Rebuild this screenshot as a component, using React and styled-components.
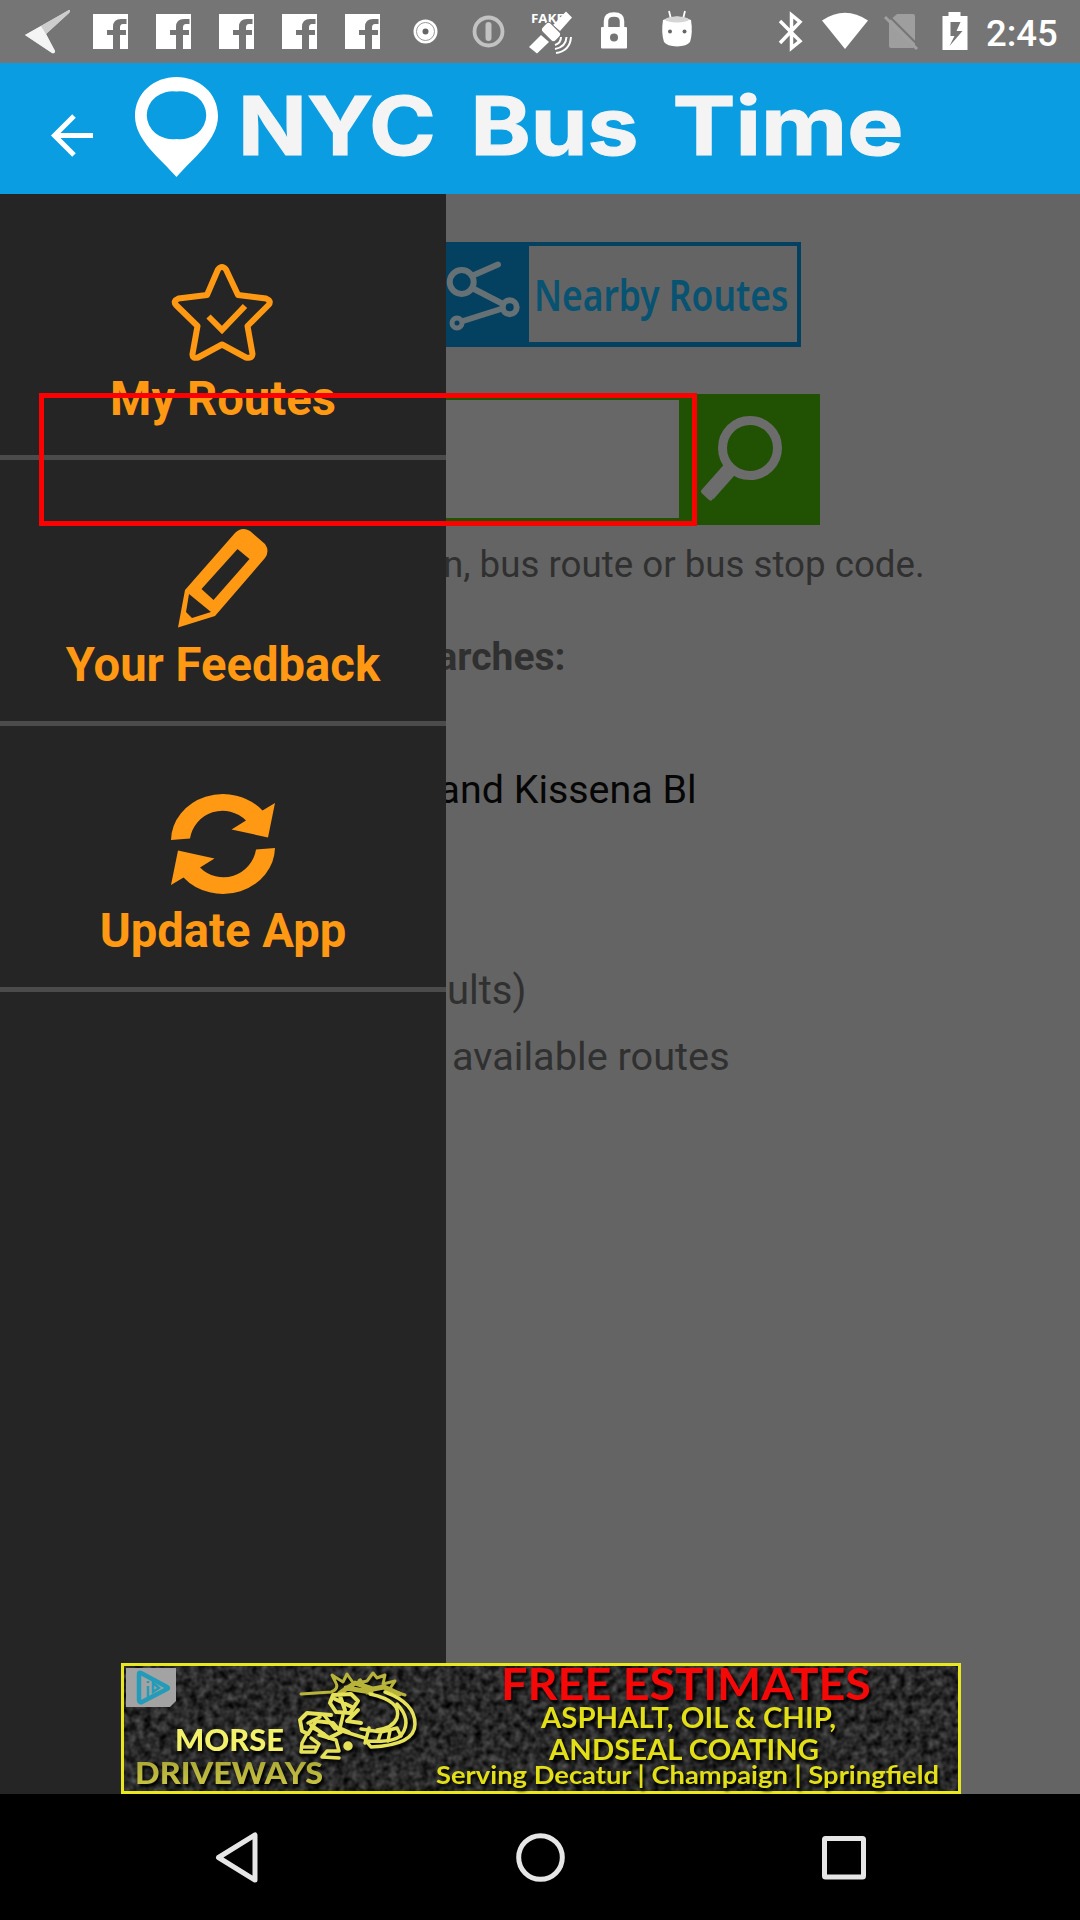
import React from "react";
import styled, { createGlobalStyle } from "styled-components";

const Global = createGlobalStyle`
  body { margin: 0; background: #646464; }
  * { box-sizing: border-box; }
  svg { display: block; flex: none; overflow: visible; }
`;

const Screen = styled.div`
  width: 1080px;
  height: 1920px;
  display: flex;
  flex-direction: column;
  overflow: hidden;
  font-family: Roboto, "Liberation Sans", sans-serif;
`;

const StatusBar = styled.header`
  height: 63px;
  flex: none;
  display: flex;
  align-items: center;
  background: #757575;
  padding-left: 16px;
`;

const Slot = styled.div`
  width: ${(p) => p.$w || 63}px;
  height: 63px;
  flex: none;
  display: flex;
  justify-content: center;
`;

const Spacer = styled.div`
  flex: 1;
`;

const Clock = styled.time`
  width: 101px;
  padding-left: 7px;
  color: #fff;
  font-size: 36.5px;
  font-weight: 500;
  line-height: 63px;
  padding-top: 3px;
`;

const AppBar = styled.div`
  height: 131px;
  flex: none;
  display: flex;
  align-items: center;
  background: #0a9de2;
  padding-left: 47px;
`;

const BackButton = styled.button`
  width: 50px;
  height: 50px;
  margin: 12px 34px 0 0;
  padding: 0;
  border: 0;
  background: none;
`;

const Body = styled.div`
  position: relative;
  flex: 1;
  display: flex;
`;

const Page = styled.main`
  flex: 1;
  display: flex;
  flex-direction: column;
  align-items: flex-start;
  padding: 48px 0 0 300px;
  background: #646464;
`;

const NearbyButton = styled.div`
  width: 501px;
  height: 105px;
  display: flex;
  justify-content: flex-end;
  background: #04405f;
  padding: 4px 4px 5px 0;
`;

const NearbyLabel = styled.div`
  width: 268px;
  height: 96px;
  background: #646464;
`;

const NearbyIcon = styled.div`
  width: 83px;
  height: 96px;
`;

const SearchRow = styled.div`
  width: 520px;
  height: 131px;
  margin-top: 47px;
  display: flex;
  background: #215203;
  padding: 6px 0 7px;
`;

const SearchInput = styled.div`
  width: 379px;
  background: #676767;
`;

const SearchButton = styled.div`
  width: 141px;
`;

const Line = styled.div`
  height: 48px;
  line-height: 48px;
  margin-top: ${(p) => p.$gap}px;
  margin-left: ${(p) => p.$left}px;
  font-size: ${(p) => p.$size || 40}px;
  font-weight: ${(p) => (p.$bold ? 700 : 400)};
  color: ${(p) => (p.$strong ? "#060606" : "#303030")};
  white-space: nowrap;
`;

const Drawer = styled.nav`
  position: absolute;
  left: 0;
  top: 0;
  bottom: 0;
  width: 446px;
  background: #252525;
`;

const DrawerItem = styled.div`
  height: 266px;
  display: flex;
  flex-direction: column;
  align-items: center;
  padding-top: 62px;
  border-bottom: 5px solid #4b4b4b;
`;

const DrawerLabel = styled.span`
  margin-top: 6px;
  font-size: 47.2px;
  line-height: 55px;
  font-weight: 700;
  color: #ff9914;
`;

const Highlight = styled.div`
  position: absolute;
  left: 39px;
  top: 199px;
  width: 658px;
  height: 133px;
  border: 5px solid #fa0202;
`;

const Ad = styled.aside`
  position: absolute;
  left: 121px;
  bottom: 0;
  width: 840px;
  height: 131px;
`;

const NavBar = styled.footer`
  height: 126px;
  flex: none;
  display: flex;
  justify-content: center;
  align-items: center;
  gap: 243px;
  background: #000;
`;

const Fit = ({ x, y, w, size, fill, weight = 700, family = "Lato", children, ...rest }) => (
  <text
    x={x}
    y={y}
    textLength={w}
    lengthAdjust="spacingAndGlyphs"
    fontSize={size}
    fill={fill}
    fontWeight={weight}
    fontFamily={`${family}, sans-serif`}
    {...rest}
  >
    {children}
  </text>
);

const Facebook = () => (
  <svg width="35" height="63" viewBox="0 0 35 63">
    <path fill="#fff" d="M0 14H35V49H27V35H33V30H27V27.500Q27 24 30 24H33.500V19H28Q20 19 20 27V30H14V35H20V49H0Z" />
  </svg>
);

const ORANGE = "#ff9914";

const StarIcon = () => (
  <svg width="110" height="110" viewBox="168 256 110 110" fill="none" stroke={ORANGE} strokeWidth="6">
    <path
      strokeLinejoin="round"
      d="M218 269.500Q222 264.500 226 269.500L238 295L266 298.500Q272 301 268.500 305L247.500 326L252.500 354Q252 359 246 357.500L222 344.500L198 357.500Q192 359 192.500 354L197.500 326L176 305Q172.500 301 178.500 298.500L207 295Z"
    />
    <path d="M208.500 316.500L222 330L245 306" />
  </svg>
);

const PencilIcon = () => (
  <svg width="110" height="110" viewBox="168 522 110 110">
    <path
      fill={ORANGE}
      fillRule="evenodd"
      d="M178 627.500L185 590L235 533Q242 526 250 531L265 544Q270 551 265 558L215 616ZM237.500 549L201.500 589L213.500 600L249.500 559ZM189 594L186 612L192 618L211 612Z"
    />
  </svg>
);

const HALF_ARROW =
  "M171 840A52 47 0 0 1 262.500 810.500L275 803L268 837.500L231.500 829.500L246 820.500A33 33 0 0 0 190 838.500Z";

const RefreshIcon = () => (
  <svg width="110" height="110" viewBox="168 788 110 110" fill={ORANGE}>
    <path d={HALF_ARROW} />
    <path d={HALF_ARROW} transform="rotate(180 223 844)" />
  </svg>
);

const AdBanner = () => (
  <svg width="840" height="131" viewBox="0 0 840 131">
    <defs>
      <filter id="asphalt" x="0" y="0" width="100%" height="100%" colorInterpolationFilters="sRGB">
        <feTurbulence type="fractalNoise" baseFrequency="0.13" numOctaves="2" seed="4" />
        <feColorMatrix values="0.42 0 0 0 -0.05  0.42 0 0 0 -0.05  0.42 0 0 0 -0.05  0 0 0 0 1" />
      </filter>
      <filter id="shadow" x="-5%" y="-20%" width="110%" height="150%" colorInterpolationFilters="sRGB">
        <feDropShadow dx="2" dy="3" stdDeviation="1.5" floodColor="#000" floodOpacity="1" />
      </filter>
      <linearGradient id="gold" x1="0" y1="0" x2="0" y2="1">
        <stop offset="0" stopColor="#a5a134" />
        <stop offset="1" stopColor="#cdc845" />
      </linearGradient>
    </defs>
    <rect width="840" height="131" fill="#2a2a2a" />
    <rect width="840" height="131" filter="url(#asphalt)" />
    <rect x="1.500" y="1.500" width="837" height="128" fill="none" stroke="#e9e71d" strokeWidth="3" />
    <path d="M5 5H55V38L49 44H5Z" fill="#a3a3a3" />
    <path d="M18 11Q18 9 20 10L46 24Q48 25 46 26L21 39Q18 40 18 37Z" fill="none" stroke="#249bb8" strokeWidth="4.500" />
    <path d="M27 18V20M27 23V34M32 20L38 25L32 29Z" fill="none" stroke="#249bb8" strokeWidth="2.500" />
    <g filter="url(#shadow)">
      <Fit x={54} y={88} w={109} size={30.500} fill="#f3f06a" weight={900}>MORSE</Fit>
      <Fit x={14} y={121} w={188} size={30.500} fill="url(#gold)" weight={900}>DRIVEWAYS</Fit>
    </g>
    <g fill="none" stroke="#e5e158" strokeWidth="3.500" strokeLinecap="round" strokeLinejoin="round" filter="url(#shadow)">
      <g stroke="#b8b43a">
        <path d="M180 31L210 29Q219 26 214 18L211 12L222 19L226 11L233 21L246 18L252 10L256 15L264 12L262 21L274 18L268 27L284 32" strokeWidth="3" />
        <path d="M219 30L234 20L252 26L263 24L278 31M225 25L250 29M239 18L246 29" strokeWidth="5" />
      </g>
      <path d="M249 31Q281 38 276 55Q272 65 256 67M264 29Q294 40 294 61Q294 82 250 84L245 78Q275 80 281 71Q291 57 276 41" />
      <path d="M240 66L260 69L276 65L280 73M248 65L244 80M260 69L257 78M269 68L267 78M218 67L244 75" />
      <path d="M212 32L230 31L237 38L229 50L215 49L209 40ZM214 36L231 44M219 33L224 47M237 47L226 58L240 60M210 52L186 50L179 57L181 68L187 71L195 58L212 60L220 69L208 75L190 62" strokeWidth="4" />
      <path d="M186 71L181 80L180 89L194 89L198 81L190 75M198 72L215 77L218 88L206 88L201 94L218 95M187 60L199 54M192 65L203 71M222 52L219 65L228 69M203 52L214 66M183 84L194 84" />
      <circle cx="227" cy="83" r="3" fill="#e5e158" />
    </g>
    <g filter="url(#shadow)">
      <Fit x={380} y={37} w={370} size={44} fill="#f50808">FREE ESTIMATES</Fit>
    </g>
    <g filter="url(#shadow)">
      <Fit x={420} y={65} w={295} size={28} fill="#e3df17">ASPHALT, OIL &amp; CHIP,</Fit>
      <Fit x={428} y={97} w={270} size={28} fill="#e3df17">ANDSEAL COATING</Fit>
      <Fit x={315} y={121} w={503} size={24} fill="#e3df17">Serving Decatur | Champaign | Springfield</Fit>
    </g>
  </svg>
);

export default function App() {
  return (
    <Screen>
      <Global />
      <StatusBar>
        <Slot>
          <svg width="63" height="63" viewBox="16 0 63 63">
            <path d="M25 35L69 10Q71 10 69 13L46 34L55 51Q55 54 52 53Z" fill="#e3e3e3" />
            <path d="M25 35L41 26L46 34L55 51Q55 54 52 53Z" fill="#f4f4f4" />
            <path d="M41 26L69 10Q71 10 69 13L46 34Z" fill="#cdcdcd" />
          </svg>
        </Slot>
        {[0, 1, 2, 3, 4].map((i) => (
          <Slot key={i}><Facebook /></Slot>
        ))}
        <Slot>
          <svg width="30" height="63" viewBox="0.500 0 30 63">
            <circle cx="15" cy="31.500" r="12" fill="#fff" />
            <circle cx="15" cy="31.500" r="9" fill="none" stroke="#999" />
            <circle cx="15" cy="31.500" r="3" fill="#666" />
          </svg>
        </Slot>
        <Slot>
          <svg width="40" height="63" viewBox="0.500 0 40 63">
            <circle cx="20" cy="31.500" r="14" fill="none" stroke="#c2c2c2" strokeWidth="3.800" />
            <path d="M20 25V38" stroke="#c2c2c2" strokeWidth="6" strokeLinecap="round" />
          </svg>
        </Slot>
        <Slot>
          <svg width="63" height="63" viewBox="520 0 63 63">
            <Fit x={531} y={22.500} w={33} size={13} fill="#fff" family="Open Sans">FAKE</Fit>
            <path d="M553 25L566 11.500L572 17.500L560 31Z" fill="#fff" />
            <path d="M529 47L541 35L549 42L537 53.500Z" fill="#fff" />
            <rect x="-9.500" y="-6" width="19" height="12" rx="3.500" transform="translate(551 32) rotate(45)" fill="#fff" stroke="#757575" />
            <path d="M561 37Q561 43 555 45M566.500 37Q566 47 555 49M571 37Q570 51 556 53" fill="none" stroke="#fff" strokeWidth="2" />
          </svg>
        </Slot>
        <Slot>
          <svg width="28" height="63" viewBox="1 0 28 63">
            <path d="M6 27V21Q6 14.500 14 14.500Q22 14.500 22 21V27" fill="none" stroke="#fff" strokeWidth="4.500" />
            <rect x="1" y="27" width="26" height="21.500" rx="1" fill="#fff" />
            <circle cx="14" cy="37.500" r="4" fill="#757575" />
          </svg>
        </Slot>
        <Slot>
          <svg width="32" height="63" viewBox="1 0 32 63">
            <path d="M8 11L10 19M24 11L22 19" stroke="#fff" strokeWidth="1.800" />
            <path d="M2 20Q16 13 30 20Q32 33 29 42Q26 46 16 46.500Q6 46 3 42Q0 33 2 20Z" fill="#fff" />
            <ellipse cx="16" cy="19.500" rx="12" ry="3" fill="#d5d5d5" />
            <circle cx="9" cy="31.500" r="2" fill="#666" />
            <circle cx="23.500" cy="31.500" r="2" fill="#666" />
          </svg>
        </Slot>
        <Spacer />
        <Slot $w={56}>
          <svg width="26" height="63" viewBox="0 0 26 63">
            <path d="M2 21L22 41L13.500 48V15L22 22L2 43" fill="none" stroke="#fff" strokeWidth="3.500" />
          </svg>
        </Slot>
        <Slot $w={52}>
          <svg width="46" height="63" viewBox="0 0 46 63">
            <path d="M0 20.500Q23 5 46 20.500L23 49Z" fill="#fff" />
          </svg>
        </Slot>
        <Slot $w={60}>
          <svg width="36" height="63" viewBox="-1 0 36 63">
            <path d="M5 21L13 14H29Q31 14 31 16V46L29 48H7Q5 48 5 46Z" fill="#9e9e9e" />
            <path d="M3 14L36 47" stroke="#757575" strokeWidth="2" />
            <path d="M1 17L33 49" stroke="#a0a0a0" strokeWidth="3" />
          </svg>
        </Slot>
        <Slot $w={48}>
          <svg width="25" height="63" viewBox="0.500 0 25 63">
            <path fill="#fff" fillRule="evenodd" d="M0 16H6V12H18V16H25V50H0ZM8 22V36H12L7 46L20 31H14L18 22Z" />
          </svg>
        </Slot>
        <Clock>2:45</Clock>
      </StatusBar>

      <AppBar>
        <BackButton aria-label="Back">
          <svg width="50" height="50" viewBox="0 0 50 50" fill="none" stroke="#fff" strokeWidth="5">
            <path d="M27 6L7.500 25.500L27 45M8 25.500H46" />
          </svg>
        </BackButton>
        <svg width="780" height="131" viewBox="131 63 780 131">
          <path
            fill="#fff"
            fillRule="evenodd"
            d="M176.500 77C154 77 135 93 135 116C135 140 160 158 176.500 177C193 158 218 140 218 116C218 93 199 77 176.500 77ZM176.500 91.500A26 24 0 1 1 176.500 139A26 24 0 1 1 176.500 91.500Z"
          />
          <g stroke="#f4f4f4" strokeWidth="1.100">
            <Fit x={238} y={154.500} w={198} size={80.500} fill="#f4f4f4" family="Inter">NYC</Fit>
            <Fit x={470.500} y={154.500} w={168} size={80.500} fill="#f4f4f4" family="Inter">Bus</Fit>
            <Fit x={672.500} y={154.500} w={231} size={80.500} fill="#f4f4f4" family="Inter">Time</Fit>
          </g>
        </svg>
      </AppBar>

      <Body>
        <Page>
          <NearbyButton>
            <NearbyIcon>
              <svg width="83" height="96" viewBox="446 246 83 96" fill="none" stroke="#667176" strokeWidth="6">
                <circle cx="461.700" cy="282" r="12" />
                <path d="M474 275L498 264.500M474 289L503 304M463 321L501 309" strokeLinecap="round" />
                <circle cx="509.700" cy="307.300" r="7" />
                <circle cx="457" cy="323" r="5" strokeWidth="5" />
              </svg>
            </NearbyIcon>
            <NearbyLabel>
              <svg width="268" height="96" viewBox="529 246 268 96">
                <Fit x={534} y={310.500} w={254.500} size={43} fill="#085272" weight={600} family="Noto Sans">Nearby Routes</Fit>
              </svg>
            </NearbyLabel>
          </NearbyButton>
          <SearchRow>
            <SearchInput />
            <SearchButton>
              <svg width="141" height="118" viewBox="679 400 141 118" fill="none" stroke="#6c6c6c">
                <circle cx="750" cy="448" r="27.500" strokeWidth="9" />
                <path d="M731 468L708 494" strokeWidth="15" />
                <path d="M703.500 491.500L710.500 498" strokeWidth="5" strokeLinecap="round" />
              </svg>
            </SearchButton>
          </SearchRow>
          <Line $gap={16} $left={143} $size={36.7}>n, bus route or bus stop code.</Line>
          <Line $gap={44} $left={136.5} $size={39} $bold>arches:</Line>
          <Line $gap={85} $left={138.5} $size={39.4} $strong>and Kissena Bl</Line>
          <Line $gap={153} $left={147}>ults)</Line>
          <Line $gap={18} $left={152} $size={39.7}>available routes</Line>
        </Page>
        <Drawer>
          <DrawerItem><StarIcon /><DrawerLabel>My Routes</DrawerLabel></DrawerItem>
          <DrawerItem><PencilIcon /><DrawerLabel>Your Feedback</DrawerLabel></DrawerItem>
          <DrawerItem><RefreshIcon /><DrawerLabel>Update App</DrawerLabel></DrawerItem>
        </Drawer>
        <Highlight />
        <Ad><AdBanner /></Ad>
      </Body>

      <NavBar>
        <svg width="60" height="60" viewBox="207 1827 60 60" fill="none" stroke="#e6e6e6" strokeWidth="5" strokeLinejoin="round">
          <path d="M218.500 1857.500L255 1835V1880Z" />
        </svg>
        <svg width="60" height="60" viewBox="509.500 1826.500 60 60" fill="none" stroke="#e6e6e6" strokeWidth="5">
          <circle cx="540" cy="1857" r="21.800" />
        </svg>
        <svg width="60" height="60" viewBox="813 1827 60 60" fill="none" stroke="#e6e6e6" strokeWidth="5">
          <rect x="824.500" y="1838.500" width="39" height="38.500" rx="1" />
        </svg>
      </NavBar>
    </Screen>
  );
}
